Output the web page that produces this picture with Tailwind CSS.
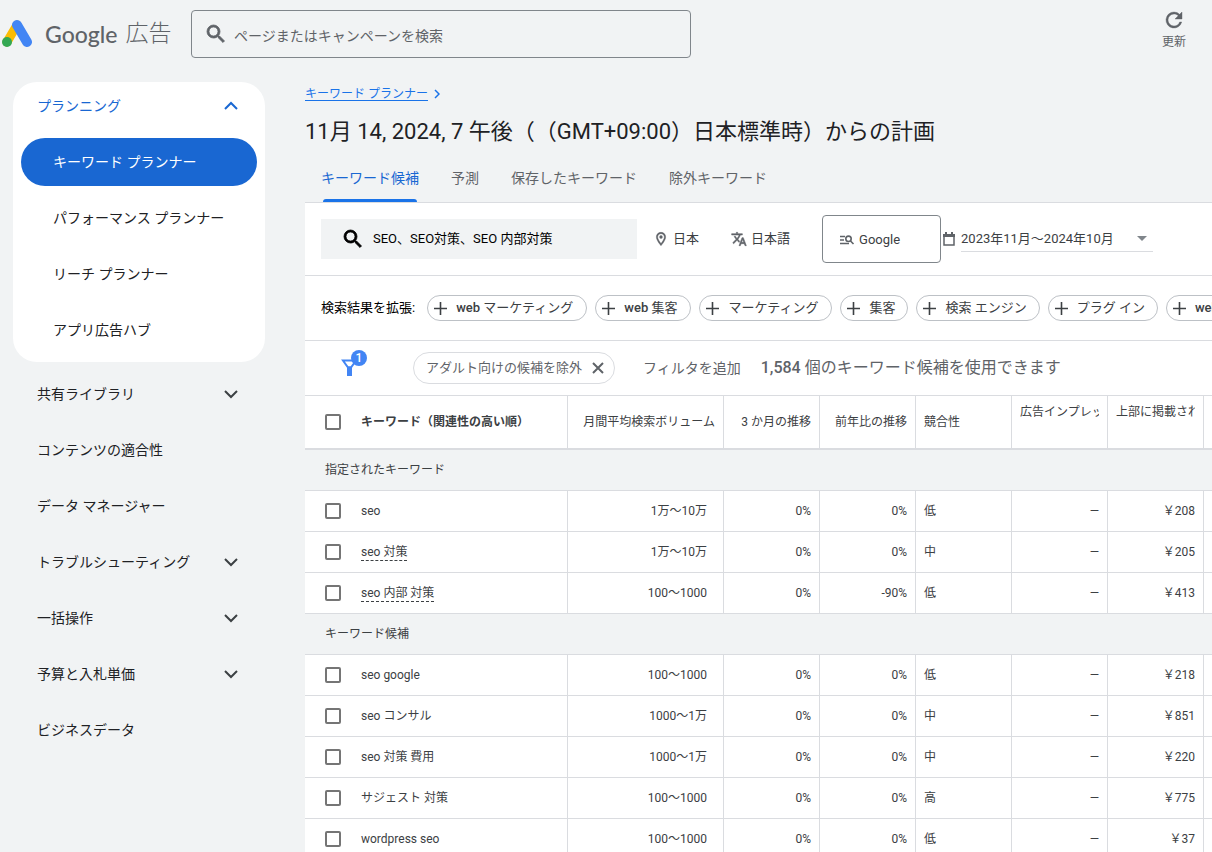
<!DOCTYPE html>
<html lang="ja">
<head>
<meta charset="utf-8">
<meta name="viewport" content="width=device-width, initial-scale=1">
<title>キーワード プランナー - Google 広告</title>
<script src="https://cdn.jsdelivr.net/npm/@tailwindcss/browser@4"></script>
</head>
<body class="flex h-screen flex-col overflow-hidden bg-[#f1f3f4] font-[Roboto,'Noto_Sans_CJK_JP',sans-serif] text-sm text-[#202124]">

<header class="flex h-[68px] shrink-0 items-center">
  <a href="#" class="flex w-[191px] shrink-0 items-center text-[#5f6368]" aria-label="Google 広告">
    <svg class="ml-0.5 size-[31px] shrink-0" viewBox="0 0 31 31" fill="none" aria-hidden="true">
      <path d="M5 23 15 6" stroke="#fbbc04" stroke-width="9" stroke-linecap="round"/>
      <path d="M15 6 25 23" stroke="#4285f4" stroke-width="10" stroke-linecap="round"/>
      <circle cx="5" cy="23" r="5" fill="#34a853"/>
    </svg>
    <span class="ml-3 flex items-center gap-2 whitespace-nowrap text-[23px] leading-8"><span class="font-[Lato,sans-serif] font-medium">Google</span><span class="font-light">広告</span></span>
  </a>
  <label class="flex h-12 w-[500px] items-center gap-1.5 rounded border border-[#80868b] px-3.5">
    <svg class="size-6 -ml-0.5 shrink-0 fill-[#5f6368]" viewBox="0 0 24 24" aria-hidden="true"><path d="M15.5 14h-.79l-.28-.27A6.471 6.471 0 0 0 16 9.5 6.5 6.5 0 1 0 9.5 16c1.61 0 3.09-.59 4.23-1.57l.27.28v.79l5 4.99L20.49 19l-4.99-5zm-6 0C7.01 14 5 11.99 5 9.5S7.01 5 9.5 5 14 7.01 14 9.5 11.99 14 9.5 14z" stroke="#5f6368" stroke-width=".8"/></svg>
    <input type="search" aria-label="検索" placeholder="ページまたはキャンペーンを検索" class="w-full bg-transparent pt-1 text-sm outline-none placeholder:text-[#5f6368]">
  </label>
  <button class="mr-[26px] ml-auto flex flex-col items-center gap-0.5 self-start pt-2 text-xs text-[#5f6368]">
    <svg class="size-6 fill-[#5f6368]" viewBox="0 0 24 24" aria-hidden="true"><path d="M17.65 6.35A7.958 7.958 0 0 0 12 4a8 8 0 1 0 7.73 10h-2.08A5.99 5.99 0 0 1 12 18a6 6 0 1 1 0-12c1.66 0 3.14.69 4.22 1.78L13 11h7V4l-2.35 2.35z" stroke="#5f6368" stroke-width=".4"/></svg>
    更新
  </button>
</header>

<div class="flex min-h-0 flex-1">
  <nav class="w-[305px] shrink-0 pt-3.5 pl-[13px]" aria-label="メイン">
    <div class="w-[252px] rounded-[24px] bg-white px-2 pb-2">
      <button class="flex h-12 w-full items-center justify-between pr-4 pl-4 text-[#1967d2]">プランニング
        <svg class="size-5" viewBox="0 0 20 20" fill="none" stroke="currentColor" stroke-width="2" aria-hidden="true"><path d="m4 13 6-6 6 6"/></svg>
      </button>
      <ul class="flex flex-col gap-2 pt-2">
        <li><a href="#" aria-current="page" class="flex h-12 items-center rounded-full bg-[#1967d2] px-8 text-white">キーワード プランナー</a></li>
        <li><a href="#" class="flex h-12 items-center px-8">パフォーマンス プランナー</a></li>
        <li><a href="#" class="flex h-12 items-center px-8">リーチ プランナー</a></li>
        <li><a href="#" class="flex h-12 items-center px-8">アプリ広告ハブ</a></li>
      </ul>
    </div>
    <ul class="flex w-[252px] flex-col gap-2 px-6 pt-2">
      <li><button class="flex h-12 w-full items-center justify-between">共有ライブラリ<svg class="size-5" viewBox="0 0 20 20" fill="none" stroke="#3c4043" stroke-width="2" aria-hidden="true"><path d="m4 7 6 6 6-6"/></svg></button></li>
      <li><a href="#" class="flex h-12 items-center">コンテンツの適合性</a></li>
      <li><a href="#" class="flex h-12 items-center">データ マネージャー</a></li>
      <li><button class="flex h-12 w-full items-center justify-between">トラブルシューティング<svg class="size-5" viewBox="0 0 20 20" fill="none" stroke="#3c4043" stroke-width="2" aria-hidden="true"><path d="m4 7 6 6 6-6"/></svg></button></li>
      <li><button class="flex h-12 w-full items-center justify-between">一括操作<svg class="size-5" viewBox="0 0 20 20" fill="none" stroke="#3c4043" stroke-width="2" aria-hidden="true"><path d="m4 7 6 6 6-6"/></svg></button></li>
      <li><button class="flex h-12 w-full items-center justify-between">予算と入札単価<svg class="size-5" viewBox="0 0 20 20" fill="none" stroke="#3c4043" stroke-width="2" aria-hidden="true"><path d="m4 7 6 6 6-6"/></svg></button></li>
      <li><a href="#" class="flex h-12 items-center">ビジネスデータ</a></li>
    </ul>
  </nav>

  <main class="min-w-0 flex-1 overflow-hidden">
    <div class="flex items-center gap-1.5 pt-4 text-xs leading-5 text-[#1a73e8]">
      <a href="#" class="underline underline-offset-2">キーワード プランナー</a>
      <svg class="h-2.5 w-1.5" viewBox="0 0 6 10" fill="none" stroke="currentColor" stroke-width="1.5" aria-hidden="true"><path d="m1 1 4 4-4 4"/></svg>
    </div>
    <h1 class="pt-3 text-[22px] leading-8 whitespace-nowrap [text-spacing-trim:space-all]">11月 14, 2024, 7 午後（（GMT+09:00）日本標準時）からの計画</h1>
    <div class="flex h-[55px] gap-8 border-b border-[#dadce0] pl-4 whitespace-nowrap text-[#5f6368]" role="tablist">
      <button role="tab" aria-selected="true" class="relative pt-1.5 text-[#1967d2]">キーワード候補<span class="absolute inset-x-0.5 bottom-0 h-[3px] rounded-t-sm bg-[#1a73e8]"></span></button>
      <button role="tab" class="pt-1.5">予測</button>
      <button role="tab" class="pt-1.5">保存したキーワード</button>
      <button role="tab" class="pt-1.5">除外キーワード</button>
    </div>

    <div class="bg-white">
      <div class="flex h-[73px] items-center border-b border-[#dadce0] pl-4 text-[13px] whitespace-nowrap text-[#3c4043]">
        <label class="flex h-10 w-[316px] shrink-0 items-center gap-2 bg-[#f1f3f4] pl-5 text-black">
          <svg class="size-6 shrink-0" viewBox="0 0 24 24" aria-hidden="true"><path d="M15.5 14h-.79l-.28-.27A6.471 6.471 0 0 0 16 9.5 6.5 6.5 0 1 0 9.5 16c1.61 0 3.09-.59 4.23-1.57l.27.28v.79l5 4.99L20.49 19l-4.99-5zm-6 0C7.01 14 5 11.99 5 9.5S7.01 5 9.5 5 14 7.01 14 9.5 11.99 14 9.5 14z" stroke="#000" stroke-width=".8"/></svg>
          <input type="text" aria-label="キーワード" value="SEO、SEO対策、SEO 内部対策" class="w-full bg-transparent outline-none">
        </label>
        <button class="ml-4 flex items-center gap-1">
          <svg class="size-4 fill-[#5f6368]" viewBox="0 0 24 24" aria-hidden="true"><path d="M12 2C8.130 2 5 5.130 5 9c0 5.250 7 13 7 13s7-7.750 7-13c0-3.870-3.130-7-7-7zM7 9c0-2.760 2.240-5 5-5s5 2.240 5 5c0 2.880-2.880 7.190-5 9.880C9.920 16.210 7 11.850 7 9z" stroke="#5f6368" stroke-width=".6"/><circle cx="12" cy="9" r="2.500"/></svg>日本
        </button>
        <button class="ml-8 flex items-center gap-1">
          <svg class="size-4 fill-[#5f6368]" viewBox="0 0 24 24" aria-hidden="true"><path d="m12.870 15.070-2.540-2.510.030-.030A17.520 17.520 0 0 0 14.070 6H17V4h-7V2H8v2H1v1.990h11.170C11.500 7.920 10.440 9.750 9 11.350 8.070 10.320 7.300 9.190 6.690 8h-2c.730 1.630 1.730 3.170 2.980 4.560l-5.090 5.020L4 19l5-5 3.110 3.110.760-2.040zM18.500 10h-2L12 22h2l1.120-3h4.750L21 22h2l-4.500-12zm-2.620 7 1.620-4.330L19.120 17h-3.240z" stroke="#5f6368" stroke-width=".8"/></svg>日本語
        </button>
        <button class="ml-8 flex h-12 w-[119px] shrink-0 items-center gap-1 rounded border border-[#80868b] pt-0.5 pl-4">
          <svg class="size-4 fill-none stroke-[#5f6368]" viewBox="0 0 16 16" stroke-width="1.600" aria-hidden="true"><path d="M1 4.500h5M1 8h4M1 11.500h9"/><circle cx="9.500" cy="6.800" r="2.700"/><path d="m11.500 9 3 3"/></svg>Google
        </button>
        <svg class="size-4 shrink-0" viewBox="0 0 16 16" fill="none" aria-hidden="true"><path d="M3 4h10v10H3z" stroke="#5f6368" stroke-width="1.500"/><path d="M2 3h12v3H2zM4 1h2v2H4zM10 1h2v2h-2z" fill="#5f6368"/></svg>
        <div class="relative ml-1 w-48 shrink-0 border-b border-[#dadce0] pt-0.5">
          <select aria-label="期間" class="w-full appearance-none bg-transparent py-0.5 outline-none"><option>2023年11月～2024年10月</option></select>
          <svg class="pointer-events-none absolute top-2.5 right-1.5 h-[5px] w-2.5 fill-[#80868b]" viewBox="0 0 10 5" aria-hidden="true"><path d="M0 0h10L5 5z"/></svg>
        </div>
      </div>

      <div class="flex h-[65px] items-center gap-2 overflow-hidden border-b border-[#dadce0] pl-4 text-[13px] whitespace-nowrap text-[#3c4043]">
        <span class="mr-1 text-black">検索結果を拡張:</span>
        <button class="flex h-[26px] shrink-0 items-center gap-2 rounded-full border border-[#bdc1c6] pr-[13px] pl-[5px] font-medium"><svg class="h-[13px] w-[15px]" viewBox="0 0 15 13" fill="none" stroke="#3c4043" stroke-width="1.600" aria-hidden="true"><path d="M1 6.500h13M7.500 0v13"/></svg><span>web <span class="font-normal">マーケティング</span></span></button>
        <button class="flex h-[26px] shrink-0 items-center gap-2 rounded-full border border-[#bdc1c6] pr-[13px] pl-[5px] font-medium"><svg class="h-[13px] w-[15px]" viewBox="0 0 15 13" fill="none" stroke="#3c4043" stroke-width="1.600" aria-hidden="true"><path d="M1 6.500h13M7.500 0v13"/></svg><span>web <span class="font-normal">集客</span></span></button>
        <button class="flex h-[26px] shrink-0 items-center gap-2 rounded-full border border-[#bdc1c6] pr-[13px] pl-[5px]"><svg class="h-[13px] w-[15px]" viewBox="0 0 15 13" fill="none" stroke="#3c4043" stroke-width="1.600" aria-hidden="true"><path d="M1 6.500h13M7.500 0v13"/></svg>マーケティング</button>
        <button class="flex h-[26px] shrink-0 items-center gap-2 rounded-full border border-[#bdc1c6] pr-3 pl-[5px]"><svg class="h-[13px] w-[15px]" viewBox="0 0 15 13" fill="none" stroke="#3c4043" stroke-width="1.600" aria-hidden="true"><path d="M1 6.500h13M7.500 0v13"/></svg>集客</button>
        <button class="flex h-[26px] shrink-0 items-center gap-2 rounded-full border border-[#bdc1c6] pr-3 pl-[5px]"><svg class="h-[13px] w-[15px]" viewBox="0 0 15 13" fill="none" stroke="#3c4043" stroke-width="1.600" aria-hidden="true"><path d="M1 6.500h13M7.500 0v13"/></svg>検索 エンジン</button>
        <button class="flex h-[26px] shrink-0 items-center gap-2 rounded-full border border-[#bdc1c6] pr-3 pl-[5px]"><svg class="h-[13px] w-[15px]" viewBox="0 0 15 13" fill="none" stroke="#3c4043" stroke-width="1.600" aria-hidden="true"><path d="M1 6.500h13M7.500 0v13"/></svg>プラグ イン</button>
        <button class="flex h-[26px] shrink-0 items-center gap-2 rounded-full border border-[#bdc1c6] pr-[13px] pl-[5px] font-medium"><svg class="h-[13px] w-[15px]" viewBox="0 0 15 13" fill="none" stroke="#3c4043" stroke-width="1.600" aria-hidden="true"><path d="M1 6.500h13M7.500 0v13"/></svg>web</button>
      </div>

      <div class="flex h-[55px] items-center border-b border-[#dadce0] pl-8 whitespace-nowrap text-[#5f6368]">
        <button class="relative size-6" aria-label="フィルタ 1 件">
          <svg class="size-6" viewBox="0 0 24 24" fill="none" aria-hidden="true"><path d="M6 4.500h13l-5 7h-3z" stroke="#4285f4" stroke-width="2"/><path d="M10 10.500h5V20h-5z" fill="#4285f4"/></svg>
          <span class="absolute -top-1.5 left-3.5 flex size-4 items-center justify-center rounded-full bg-[#4285f4] text-xs font-medium text-white">1</span>
        </button>
        <div class="ml-[52px] flex h-8 items-center gap-2.5 rounded-full border border-[#dadce0] pr-2.5 pl-3 text-[13px]">アダルト向けの候補を除外
          <button aria-label="削除"><svg class="size-3" viewBox="0 0 12 12" fill="none" stroke="#5f6368" stroke-width="2" aria-hidden="true"><path d="m1 1 10 10M11 1 1 11"/></svg></button>
        </div>
        <button class="ml-7">フィルタを追加</button>
        <span class="ml-5 text-base"><span class="font-medium">1,584</span> 個のキーワード候補を使用できます</span>
      </div>

      <table class="w-full table-fixed border-separate border-spacing-0 text-xs text-[#3c4043] [&_td]:border-b [&_td]:border-[#dadce0] [&_th]:border-b-2 [&_th]:border-[#dadce0] [&_td:not(:last-child)]:border-r [&_th:not(:last-child)]:border-r [&_td]:whitespace-nowrap [&_th]:whitespace-nowrap [&_td]:px-2 [&_th]:px-2 [&_td]:text-right">
        <colgroup><col class="w-[263px]"><col class="w-[156px]"><col class="w-24"><col class="w-24"><col class="w-24"><col class="w-24"><col class="w-24"><col></colgroup>
        <thead>
          <tr class="h-[54px] font-medium">
            <th scope="col" class="text-left"><label class="flex items-center gap-5 pl-3 font-bold"><input type="checkbox" class="size-4 appearance-none rounded-xs border-2 border-[#757575]">キーワード（関連性の高い順）</label></th>
            <th scope="col" class="text-right font-normal">月間平均検索ボリューム</th>
            <th scope="col" class="text-right font-normal">3 か月の推移</th>
            <th scope="col" class="text-right font-normal">前年比の推移</th>
            <th scope="col" class="text-left font-normal">競合性</th>
            <th scope="col" class="pt-2 text-left align-top font-normal"><div class="overflow-hidden">広告インプレッ</div></th>
            <th scope="col" class="pt-2 text-left align-top font-normal"><div class="overflow-hidden">上部に掲載され</div></th>
            <th scope="col" aria-label="その他"></th>
          </tr>
        </thead>
        <tbody id="rows"></tbody>
      </table>
    </div>
  </main>
</div>

<script>
const groups = [
  ['指定されたキーワード', [
    ['seo', '1万～10万', '0%', '低', '208', false],
    ['seo 対策', '1万～10万', '0%', '中', '205', true],
    ['seo 内部 対策', '100～1000', '-90%', '低', '413', true]
  ]],
  ['キーワード候補', [
    ['seo google', '100～1000', '0%', '低', '218', false],
    ['seo コンサル', '1000～1万', '0%', '中', '851', false],
    ['seo 対策 費用', '1000～1万', '0%', '中', '220', false],
    ['サジェスト 対策', '100～1000', '0%', '高', '775', false],
    ['wordpress seo', '100～1000', '0%', '低', '37', false]
  ]]
];
document.getElementById('rows').innerHTML = groups.map(([title, rows]) =>
  `<tr class="h-[41px] bg-[#f1f3f4]"><th scope="rowgroup" colspan="8" class="border-b! text-left font-normal"><span class="pl-3">${title}</span></th></tr>` +
  rows.map(([kw, vol, yoy, comp, bid, dashed]) => `<tr class="h-[41px]">
    <td><label class="flex items-center gap-5 pl-3"><input type="checkbox" class="size-4 appearance-none rounded-xs border-2 border-[#757575]"><span class="${dashed ? 'border-b border-dashed border-[#3c4043] leading-4' : 'leading-4'}">${kw}</span></label></td>
    <td class="pr-4!">${vol}</td><td>0%</td><td>${yoy}</td><td class="text-left!">${comp}</td><td>—</td><td>￥${bid}</td><td></td></tr>`).join('')
).join('');
</script>
</body>
</html>
